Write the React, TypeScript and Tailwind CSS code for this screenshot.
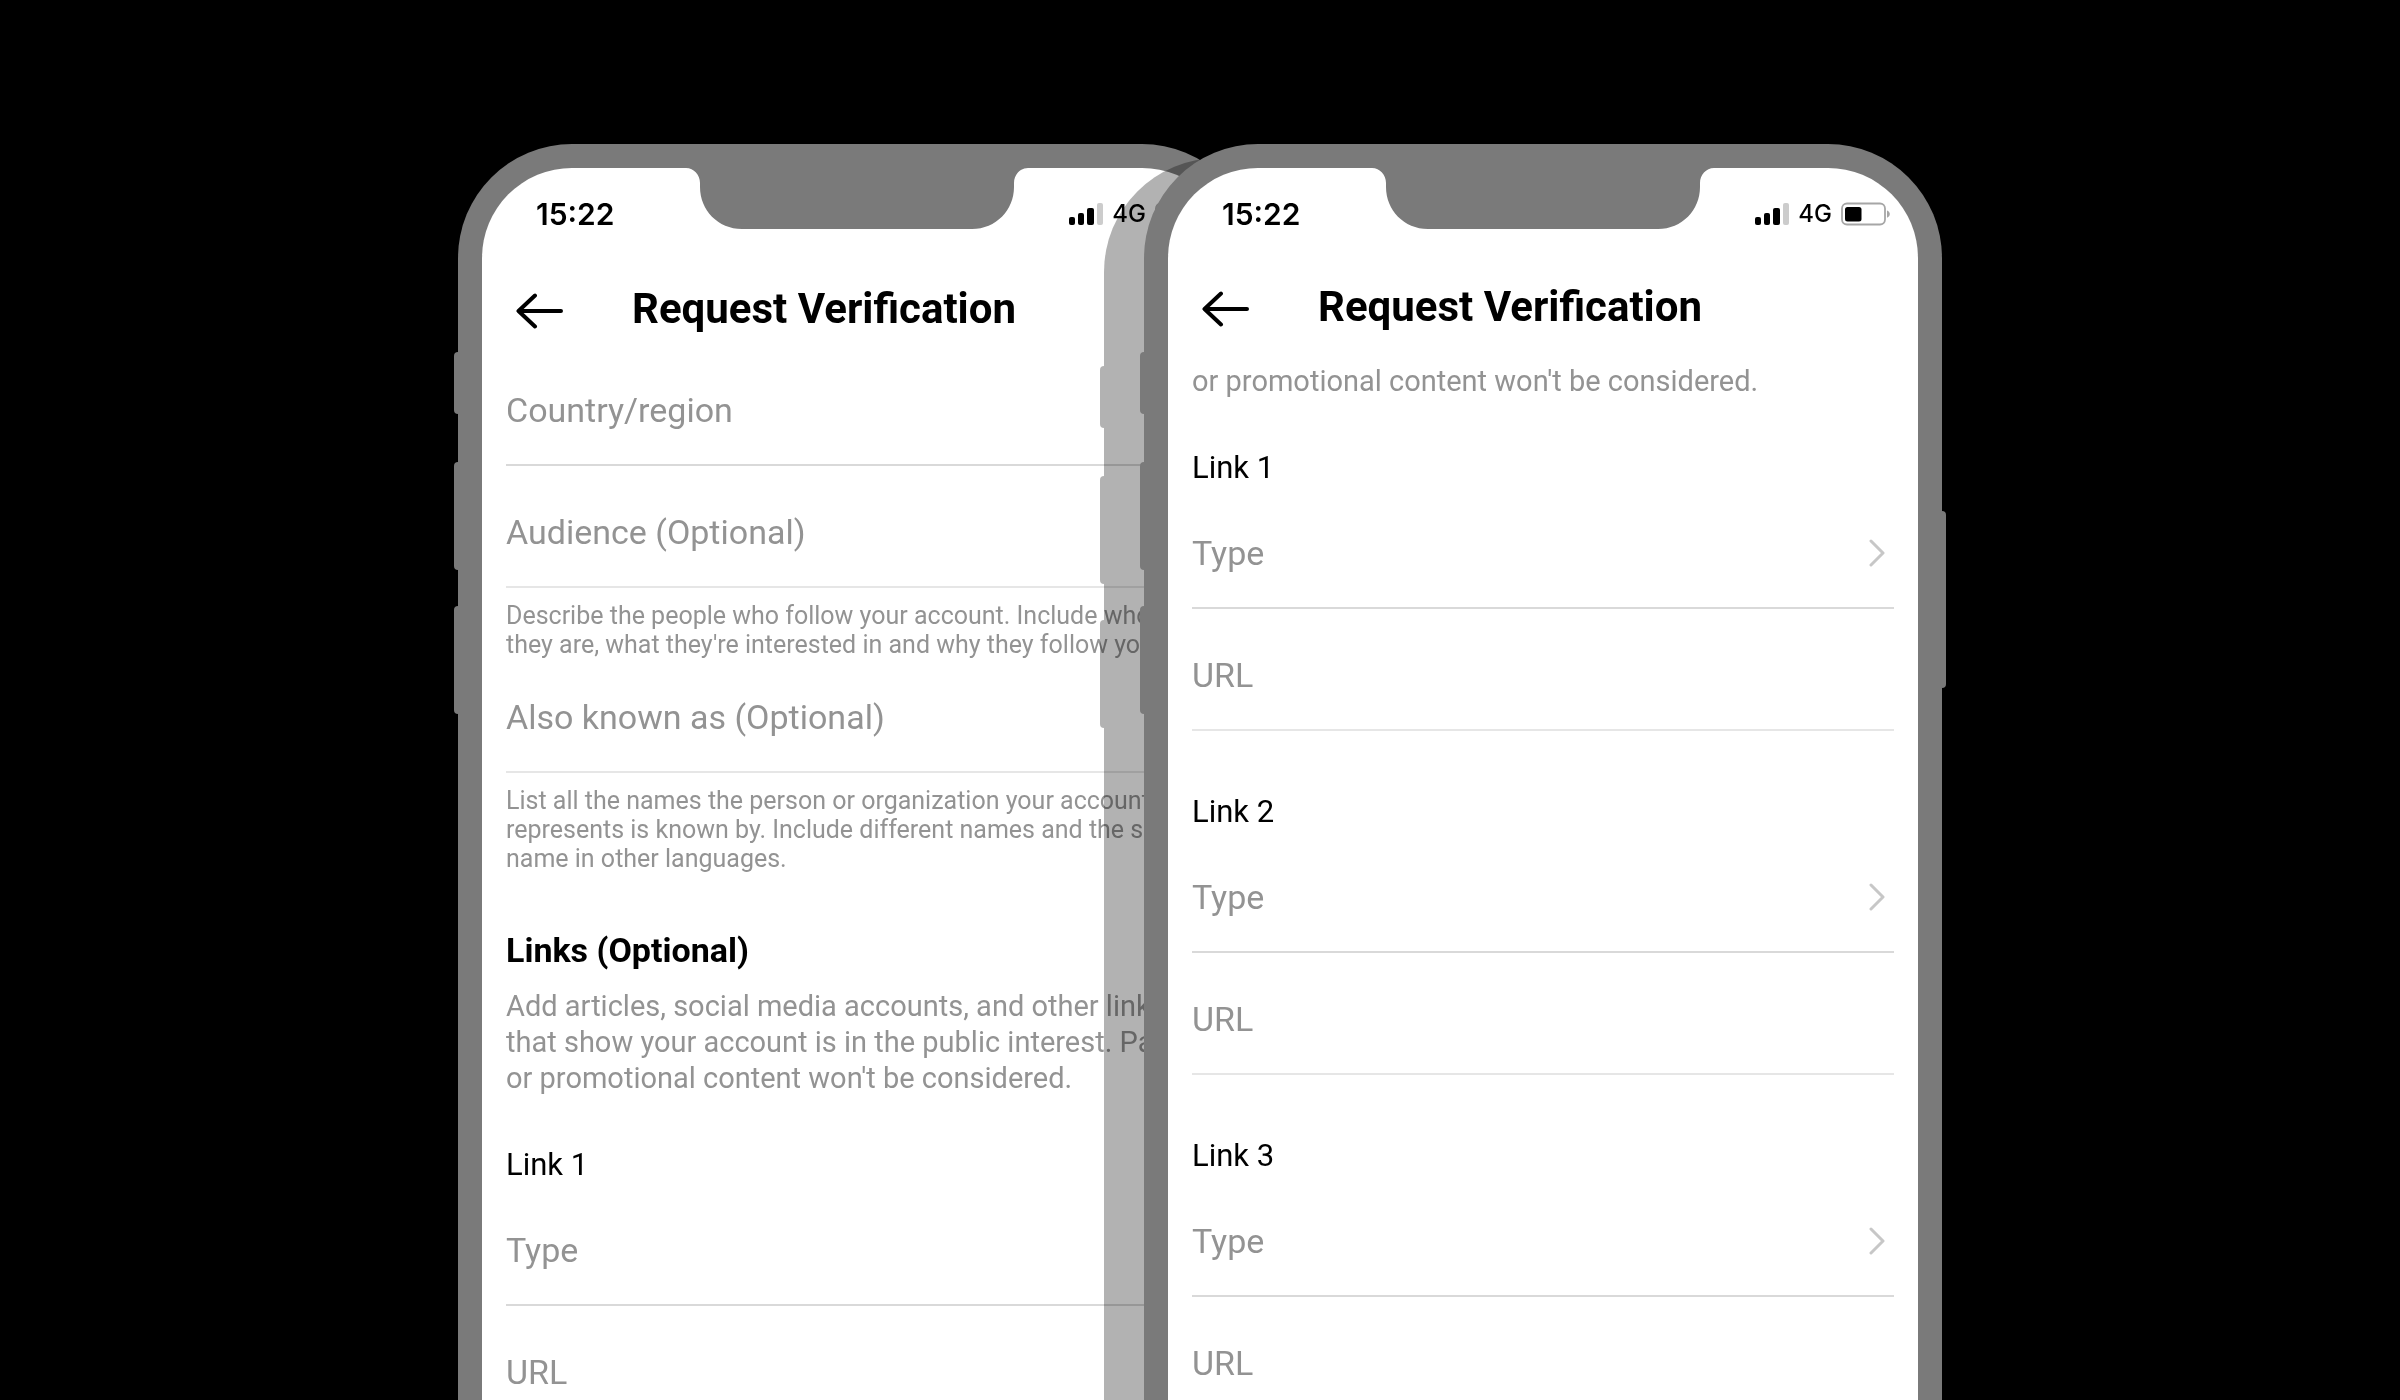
import React from 'react';

const SignalIcon = () => (
  <svg width="34" height="22" viewBox="0 0 34 22" aria-hidden="true">
    <rect x="0" y="14" width="6" height="8" rx="2" />
    <rect x="9" y="10" width="6" height="12" rx="2" />
    <rect x="18" y="5" width="7" height="17" rx="2" />
    <rect x="28" y="0" width="6" height="22" rx="2" fill="#cccccc" />
  </svg>
);

const BatteryIcon = () => (
  <svg width="49" height="24" viewBox="0 0 49 24" aria-hidden="true">
    <rect x="1" y="1.5" width="43" height="21" rx="5" fill="none" stroke="#a6a6a6" strokeWidth="1.8" />
    <rect x="4" y="5" width="16.5" height="14.5" rx="2.5" />
    <path d="M46 8.5c1.8.6 2.8 2 2.8 3.6s-1 3-2.8 3.6z" fill="#a6a6a6" />
  </svg>
);

const BackIcon = () => (
  <svg width="48" height="36" viewBox="0 0 48 36" fill="none" stroke="#000" strokeWidth="4" strokeLinecap="round" strokeLinejoin="round" aria-hidden="true">
    <path d="M19 2.5 2.5 18 19 33.5M3 18h42" />
  </svg>
);

const ChevronIcon = () => (
  <svg width="16" height="28" viewBox="0 0 16 28" fill="none" stroke="#c7c7c7" strokeWidth="3" strokeLinecap="round" strokeLinejoin="round" aria-hidden="true">
    <path d="M2 2 14 14 2 26" />
  </svg>
);

const Notch = () => (
  <svg width="342" height="62" viewBox="0 0 342 62" fill="#7a7a7a" className="absolute left-1/2 -top-px -translate-x-1/2" aria-hidden="true">
    <path d="M0 0v1c8 0 14 7 14 15v4c0 23 18 42 42 42h230c24 0 42-19 42-42v-4c0-8 6-15 14-15V0z" />
  </svg>
);

interface PhoneProps {
  className?: string;
  headerClass: string;
  children: React.ReactNode;
}

const Phone: React.FC<PhoneProps> = ({ className = '', headerClass, children }) => (
  <section className={`relative w-[33.25%] shrink-0 drop-shadow-[-40px_14px_0_rgba(0,0,0,0.3)] ${className}`}>
    {/* Side buttons */}
    <div className="absolute -left-1 top-[208px] h-[62px] w-3 rounded-sm bg-[#7a7a7a]" />
    <div className="absolute -left-1 top-[318px] h-[108px] w-3 rounded-sm bg-[#7a7a7a]" />
    <div className="absolute -left-1 top-[462px] h-[108px] w-3 rounded-sm bg-[#7a7a7a]" />
    <div className="absolute -right-1 top-[367px] h-[177px] w-3 rounded-sm bg-[#7a7a7a]" />

    <div className="relative min-h-full rounded-t-[114px] bg-[#7a7a7a] px-6 pt-6">
      <div className="relative min-h-[1600px] rounded-t-[90px] bg-white">
        <Notch />
        <div className="flex h-[100px] items-center justify-between pb-2 pl-[54px] pr-7 font-['Inter',sans-serif]">
          <span className="text-[30px] font-semibold">15:22</span>
          <div className="flex items-center gap-[9px]">
            <SignalIcon />
            <span className="text-[24px] leading-6 font-medium">4G</span>
            <BatteryIcon />
          </div>
        </div>
        <header className={`flex items-center gap-[68px] pl-[34px] ${headerClass}`}>
          <button type="button" aria-label="Back">
            <BackIcon />
          </button>
          <h1 className="pb-1 text-[42px] leading-[48px] font-bold">Request Verification</h1>
        </header>
        <div className="px-6">{children}</div>
      </div>
    </div>
  </section>
);

const TextRow: React.FC<{ label: string; className?: string }> = ({ label, className = 'mt-3' }) => (
  <input
    type="text"
    aria-label={label}
    placeholder={label}
    className={`block h-[110px] w-full border-b-2 border-[#e6e6e6] text-[34px] outline-none placeholder:text-[#939393] ${className}`}
  />
);

const PickerRow: React.FC<{ label: string; className?: string }> = ({ label, className = 'mt-3' }) => (
  <button
    type="button"
    className={`flex h-[110px] w-full items-center justify-between border-b-2 border-[#d9d9d9] pr-[9px] text-left text-[34px] text-[#939393] ${className}`}
  >
    {label}
    <ChevronIcon />
  </button>
);

const HelpText: React.FC<{ children: React.ReactNode }> = ({ children }) => (
  <p className="mt-[13px] text-[25px] leading-[29px] whitespace-nowrap text-[#939393]">{children}</p>
);

const LinkGroup: React.FC<{ index: number; className: string }> = ({ index, className }) => (
  <div className={className}>
    <h3 className="text-[31px] leading-[42px]">Link {index}</h3>
    <PickerRow label="Type" className="mt-[10px]" />
    <TextRow label="URL" />
  </div>
);

export default function App() {
  return (
    <main className="flex h-screen justify-center overflow-hidden bg-black pt-36 font-['Roboto',sans-serif] text-black">
      <Phone headerClass="h-[86px]">
        <PickerRow label="Country/region" className="mt-0.5" />
        <TextRow label="Audience (Optional)" />
        <HelpText>
          Describe the people who follow your account. Include who
          <br />
          they are, what they're interested in and why they follow you.
        </HelpText>
        <TextRow label="Also known as (Optional)" className="mt-1" />
        <HelpText>
          List all the names the person or organization your account
          <br />
          represents is known by. Include different names and the same
          <br />
          name in other languages.
        </HelpText>

        <h2 className="mt-[57px] text-[34px] leading-10 font-bold">Links (Optional)</h2>
        <p className="mt-[18px] text-[29px] leading-9 whitespace-nowrap text-[#939393]">
          Add articles, social media accounts, and other links
          <br />
          that show your account is in the public interest. Paid
          <br />
          or promotional content won't be considered.
        </p>
        <LinkGroup index={1} className="mt-12" />
      </Phone>

      <Phone headerClass="h-[82px]" className="-ml-28">
        <p className="pt-[13px] text-[29px] leading-9 text-[#939393]">or promotional content won't be considered.</p>
        <LinkGroup index={1} className="mt-12" />
        <LinkGroup index={2} className="mt-[60px]" />
        <LinkGroup index={3} className="mt-[60px]" />
      </Phone>
    </main>
  );
}
